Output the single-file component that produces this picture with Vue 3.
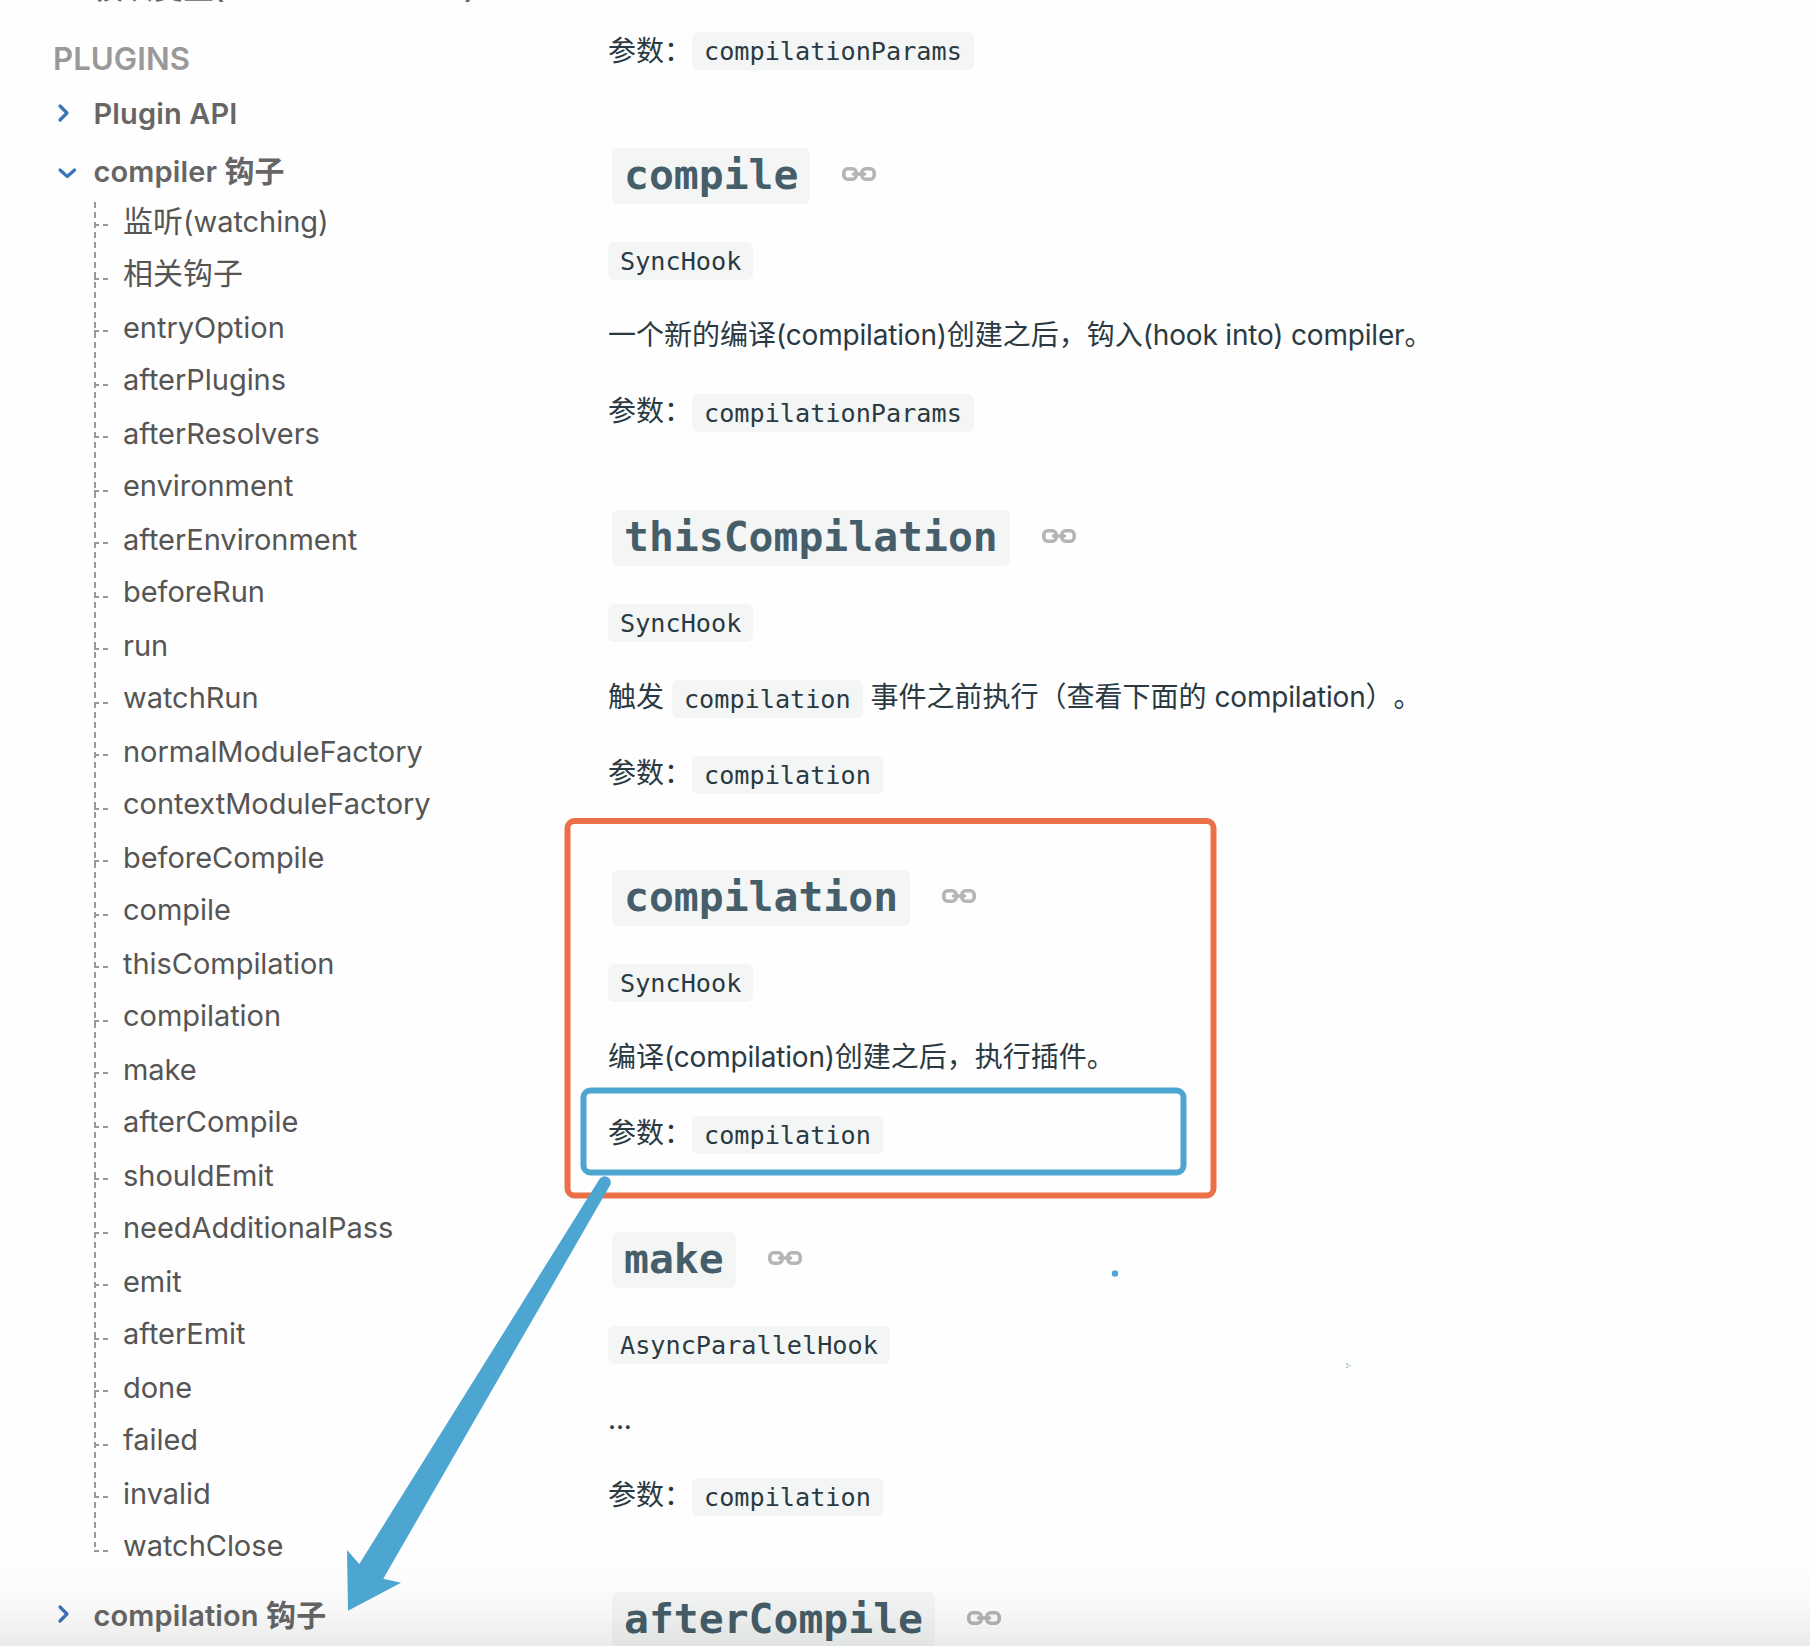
<script setup>
const hooks = [
  { zh: '监听', name: '(watching)' }, { zh: '相关钩子', name: '' },
  ...['entryOption', 'afterPlugins', 'afterResolvers', 'environment', 'afterEnvironment', 'beforeRun', 'run', 'watchRun', 'normalModuleFactory', 'contextModuleFactory', 'beforeCompile', 'compile', 'thisCompilation', 'compilation', 'make', 'afterCompile', 'shouldEmit', 'needAdditionalPass', 'emit', 'afterEmit', 'done', 'failed', 'invalid', 'watchClose'].map(name => ({ zh: '', name })),
]

const sections = [
  { name: 'compile', type: 'SyncHook', text: [{ t: '一个新的编译' }, { l: '(compilation)' }, { t: '创建之后，钩入' }, { l: '(hook into) compiler' }, { t: '。' }], param: 'compilationParams' },
  { name: 'thisCompilation', type: 'SyncHook', text: [{ t: '触发 ' }, { c: 'compilation' }, { t: ' 事件之前执行（查看下面的 ' }, { l: 'compilation' }, { t: '）。' }], param: 'compilation' },
  { name: 'compilation', type: 'SyncHook', text: [{ t: '编译' }, { l: '(compilation)' }, { t: '创建之后，执行插件。' }], param: 'compilation' },
  { name: 'make', type: 'AsyncParallelHook', text: [{ l: '...' }], param: 'compilation' },
  { name: 'afterCompile' },
]
</script>

<template>
  <div class="page">
    <aside class="sidebar">
      <div class="group clipped"><span class="label"><span class="zh">模块变量</span>(module variables)</span></div>
      <h4 class="caption">PLUGINS</h4>
      <div class="group first">
        <svg class="chevron" viewBox="0 0 20 20"><path d="M6 3l7 7-7 7" /></svg>
        <span class="label">Plugin API</span>
      </div>
      <div class="group open">
        <svg class="chevron" viewBox="0 0 20 20"><path d="M6 9l7.300 6.500 7.300-6.500" /></svg>
        <span class="label">compiler <span class="zh">钩子</span></span>
      </div>
      <ul class="tree">
        <li v-for="h in hooks" :key="h.zh + h.name"><span v-if="h.zh" class="zh">{{ h.zh }}</span>{{ h.name }}</li>
      </ul>
      <div class="group last">
        <svg class="chevron" viewBox="0 0 20 20"><path d="M6 3l7 7-7 7" /></svg>
        <span class="label">compilation <span class="zh">钩子</span></span>
      </div>
    </aside>

    <main class="content">
      <p class="row">参数：<code>compilationParams</code></p>
      <section v-for="s in sections" :key="s.name">
        <h3>
          <code>{{ s.name }}</code>
          <svg class="link" viewBox="0 0 34 14">
            <rect x="1.800" y="1.800" width="12.400" height="10.400" rx="4" />
            <rect x="19.800" y="1.800" width="12.400" height="10.400" rx="4" />
            <path d="M11.500 7h11" />
          </svg>
        </h3>
        <template v-if="s.type">
          <p class="row"><code>{{ s.type }}</code></p>
          <p class="row"><template v-for="(x, i) in s.text" :key="i"><code v-if="x.c">{{ x.c }}</code><span v-else-if="x.l" class="latin">{{ x.l }}</span><template v-else>{{ x.t }}</template></template></p>
          <p class="row">参数：<code>{{ s.param }}</code></p>
        </template>
      </section>
    </main>

    <div class="fade"></div>
    <svg class="marks" viewBox="0 0 1810 1646">
      <rect x="567.500" y="821" width="646" height="374.500" rx="7" fill="none" stroke="#ec7047" stroke-width="6" />
      <rect x="583.500" y="1090.500" width="600" height="82" rx="7" fill="none" stroke="#4da6d2" stroke-width="6" />
      <path fill="#4da6d2" d="M599.500 1179A6.200 6.200 0 0 1 610.500 1184.500L383.300 1578.700L401 1582.700L348 1610.700L347 1550L359.300 1564Z" />
      <circle cx="1115" cy="1273.500" r="3.200" fill="#4da6d2" />
      <path d="M1346 1363.500l2.500 1.500M1346 1368l2.500-1.500" stroke="#6f8fa3" stroke-width="1" opacity=".8" />
      <path d="M1347.500 1366.500l3.500-1" stroke="#a9dbe8" stroke-width="1" />
    </svg>
  </div>
</template>

<style>
body { margin: 0; background: #fefefe; }
</style>

<style scoped>
.page { position: relative; display: flex; width: 1810px; height: 1646px; overflow: hidden; background: #fefefe; font-family: Inter, "Noto Sans CJK SC", sans-serif; text-spacing-trim: space-all; }
.sidebar { width: 608px; flex: none; box-sizing: border-box; padding-left: 53px; color: #555; font-size: 29px; }
.zh { font-size: 30px; }
.group { display: flex; align-items: center; height: 40px; font-weight: 600; color: #666; font-size: 29px; line-height: 40px; letter-spacing: .12px; white-space: nowrap; }
.label { padding-top: 2px; }
.chevron { width: 20px; height: 20px; margin: 0 19.500px 0 1px; overflow: visible; }
.chevron path { fill: none; stroke: #3c74b8; stroke-width: 3.200; stroke-linecap: round; stroke-linejoin: round; }
.clipped { margin-top: -34px; padding-left: 40.500px; letter-spacing: 0; }
.caption { margin: 33px 0 0; height: 40px; line-height: 40px; font-size: 31.200px; font-weight: 560; letter-spacing: .05px; color: #999; }
.first { margin-top: 14px; }
.open { margin-top: 18px; }
.open .label { padding-top: 0; }
.tree { position: relative; list-style: none; margin: 10px 0 0 41px; padding: 0; letter-spacing: -.04px; }
.tree::before { content: ""; position: absolute; left: 0; top: 1px; width: 2px; height: 1345px; background: repeating-linear-gradient(#999 0 6px, transparent 6px 10px); }
.tree li { position: relative; height: 54px; line-height: 42px; padding-left: 29px; white-space: nowrap; }
.tree li:nth-child(odd) { height: 52px; }
.tree li::before { content: ""; position: absolute; left: 0; top: 23px; width: 14px; height: 2px; background: linear-gradient(90deg, #999 0 5px, transparent 5px 9px, #999 9px); }
.tree li:nth-child(even)::before { top: 25px; }
.tree li:nth-child(-n+2) { line-height: 40px; }
.last { margin-top: 15px; }
.last .label { padding-top: 3px; }
.last .chevron { margin-top: -1px; }
.content { flex: 1; padding-top: 32px; color: #2b3a42; font-size: 28px; }
.row { display: flex; align-items: flex-start; height: 38px; margin: 0 0 38px; line-height: 34px; white-space: pre; }
.latin { letter-spacing: -.18px; }
.row code { box-sizing: border-box; height: 38px; padding: 1px 12px 0; line-height: 37px; font-family: "DejaVu Sans Mono", monospace; font-size: 25.200px; background: #f4f6f6; border-radius: 6px; }
.content > .row { margin-bottom: 78px; line-height: 38px; }
section { height: 362px; }
section:nth-of-type(even) { height: 360px; }
h3 { display: flex; align-items: center; height: 56px; margin: 0 0 38px 4px; }
h3 code { height: 56px; line-height: 55px; padding: 0 12px; font-family: "DejaVu Sans Mono", monospace; font-size: 41.400px; font-weight: 700; color: #465e69; background: #f4f6f6; border-radius: 6px; }
.link { width: 34px; height: 14px; margin: -4px 0 0 32px; }
.link rect, .link path { fill: none; stroke: #b5b5b5; stroke-width: 3.600; stroke-linecap: round; }
.fade { position: absolute; left: 0; right: 0; bottom: 0; height: 84px; background: linear-gradient(rgba(0, 0, 0, 0), rgba(0, 0, 0, .02) 50%, rgba(0, 0, 0, .075)); }
.marks { position: absolute; left: 0; top: 0; width: 1810px; height: 1646px; }
</style>
